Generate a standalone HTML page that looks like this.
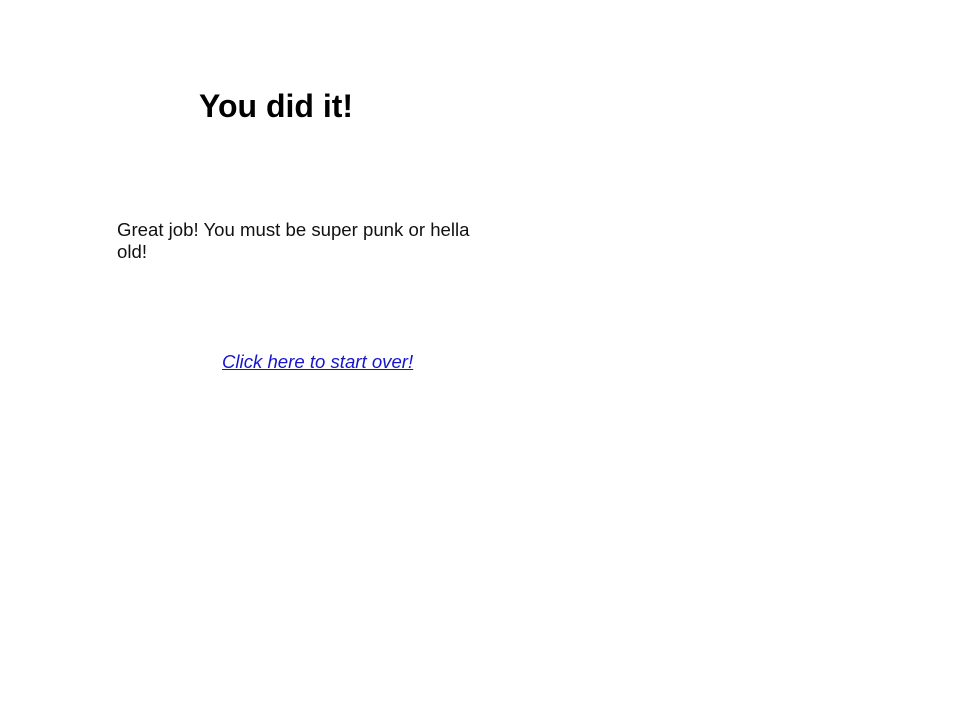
<!DOCTYPE html>
<html><head><style>
body{margin:0;background:#fff;font-family:"Liberation Sans",sans-serif;width:960px;height:720px;position:relative}
h1{position:absolute;left:199px;top:86px;margin:0;font-size:32px;font-weight:bold;line-height:40px}
p{position:absolute;left:117px;top:219px;margin:0;width:375px;font-size:18.6px;line-height:22px;color:#111}
a{position:absolute;left:222px;top:351px;font-size:18.6px;line-height:22px;color:#1515d0;font-style:italic}
</style></head><body>
<h1>You did it!</h1>
<p>Great job! You must be super punk or hella old!</p>
<a href="#">Click here to start over!</a>
</body></html>
